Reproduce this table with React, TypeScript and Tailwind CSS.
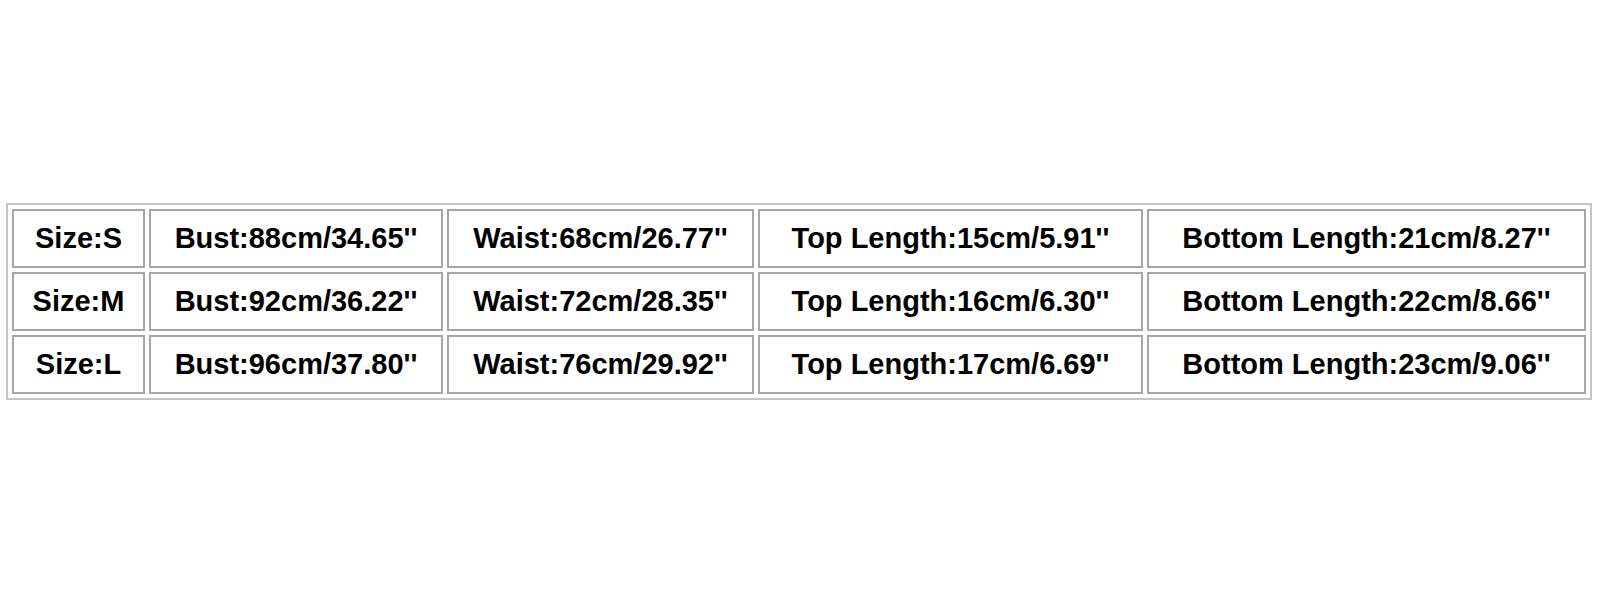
import React from 'react';

const rows = [
  ['Size:S', "Bust:88cm/34.65''", "Waist:68cm/26.77''", "Top Length:15cm/5.91''", "Bottom Length:21cm/8.27''"],
  ['Size:M', "Bust:92cm/36.22''", "Waist:72cm/28.35''", "Top Length:16cm/6.30''", "Bottom Length:22cm/8.66''"],
  ['Size:L', "Bust:96cm/37.80''", "Waist:76cm/29.92''", "Top Length:17cm/6.69''", "Bottom Length:23cm/9.06''"],
];

const App = () => {
  return (
    <div className="w-[1600px] h-[600px] bg-white pt-[203px] pl-[6px]" style={{ fontFamily: '"Liberation Sans", Arial, sans-serif' }}>
      <div className="w-[1586px] border-2 border-[#c4c4c4] p-[4px] grid grid-cols-[133px_294px_307px_385px_439px] grid-rows-[59px_59px_59px] gap-[4px]">
        {rows.flat().map((cell, i) => (
          <div
            key={i}
            className="border-2 border-[#a6a6a6] flex items-center justify-center text-[29px] font-bold text-black leading-none"
          >
            {cell}
          </div>
        ))}
      </div>
    </div>
  );
};

export default App;
